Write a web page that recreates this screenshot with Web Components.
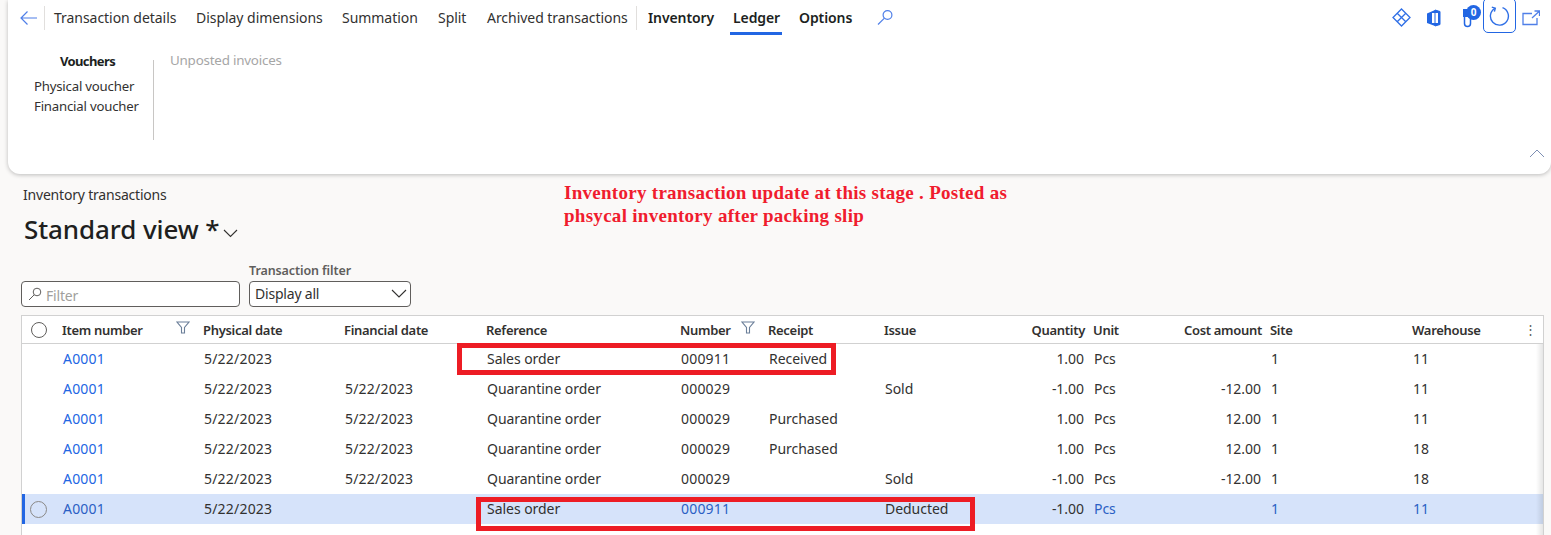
<!DOCTYPE html>
<html>
<head>
<meta charset="utf-8">
<style>
  html, body { margin: 0; height: 100%; overflow: hidden; background: #faf9f8; }
  body { font: 14px "Noto Sans", "Open Sans", sans-serif; color: #323130; }
  tx-page { width: 1551px; height: 535px; }
</style>
</head>
<body>
<tx-page>
  <tx-ribbon slot="ribbon">
    <tx-tab w="142">Transaction details</tx-tab>
    <tx-tab w="146">Display dimensions</tx-tab>
    <tx-tab w="96">Summation</tx-tab>
    <tx-tab w="49">Split</tx-tab>
    <tx-tab w="150" divider>Archived transactions</tx-tab>
    <tx-tab w="85" strong>Inventory</tx-tab>
    <tx-tab w="66" strong active>Ledger</tx-tab>
    <tx-tab w="77" strong>Options</tx-tab>
  </tx-ribbon>
  <tx-heading slot="heading"></tx-heading>
  <tx-note slot="note">Inventory transaction update at this stage . Posted as<br>phsycal inventory after packing slip</tx-note>
  <tx-grid slot="grid">
    <tx-row values="A0001|5/22/2023||Sales order|000911|Received||1.00|Pcs||1|11"></tx-row>
    <tx-row values="A0001|5/22/2023|5/22/2023|Quarantine order|000029||Sold|-1.00|Pcs|-12.00|1|11"></tx-row>
    <tx-row values="A0001|5/22/2023|5/22/2023|Quarantine order|000029|Purchased||1.00|Pcs|12.00|1|11"></tx-row>
    <tx-row values="A0001|5/22/2023|5/22/2023|Quarantine order|000029|Purchased||1.00|Pcs|12.00|1|18"></tx-row>
    <tx-row values="A0001|5/22/2023|5/22/2023|Quarantine order|000029||Sold|-1.00|Pcs|-12.00|1|18"></tx-row>
    <tx-row selected values="A0001|5/22/2023||Sales order|000911||Deducted|-1.00|Pcs||1|11"></tx-row>
    <tx-mark style="left:435px;top:27px;width:369px;height:22px"></tx-mark>
    <tx-mark style="left:454px;top:181px;width:489px;height:24px"></tx-mark>
  </tx-grid>
</tx-page>

<script>
class TxPage extends HTMLElement {
  constructor() {
    super()
    this.attachShadow({ mode: 'open' }).innerHTML = `
      <style>
        :host { display: block; position: relative; overflow: hidden; }
        .body { display: flex; flex-direction: column; }
      </style>
      <div class="body">
        <slot name="ribbon"></slot>
        <slot name="heading"></slot>
        <slot name="grid"></slot>
      </div>
      <slot name="note"></slot>`
  }
}

class TxRibbon extends HTMLElement {
  constructor() {
    super()
    this.attachShadow({ mode: 'open' }).innerHTML = `
      <style>
        :host { display: block; margin-left: 8px; height: 174px; background: #fff; border-radius: 0 0 12px 12px;
          box-shadow: 0 1px 4px rgba(0,0,0,.25); position: relative; letter-spacing: -.04px; }
        .bar { display: flex; align-items: center; height: 35px; }
        .back { width: 25px; margin-left: 11px; display: flex; height: 24px; align-items: center; border-right: 1px solid #e1dfdd; margin-right: 9px; }
        .search { display: flex; }
        .tools { margin-left: auto; display: flex; align-items: center; height: 35px; padding-right: 11px; }
        .tools svg { display: block; }
        .clip { position: relative; width: 20px; height: 20px; margin: 0 1px 0 20px; }
        .clip svg { overflow: visible; }
        .badge { position: absolute; left: 4px; top: -3px; width: 15px; height: 15px; border-radius: 50%; background: #2266e3;
          color: #fff; font-size: 10px; font-weight: 700; line-height: 15px; text-align: center; letter-spacing: 0; }
        .refresh { width: 31px; height: 33px; border: 1px solid #2266e3; border-radius: 5px;
          display: flex; align-items: center; justify-content: center; align-self: flex-start; margin-top: -2px; margin-right: 6px; }
        .refresh svg { margin-left: -2px; }
        .panel { display: flex; padding-top: 9px; }
        .group { width: 145px; padding-left: 1px; box-sizing: border-box; }
        .group h4 { margin: 8px 0 6px 0; font-size: 13px; font-weight: 700; text-align: center; color: #201f1e; line-height: 18px; width: 157px; letter-spacing: -.6px; }
        .group div { line-height: 20px; padding-left: 25px; white-space: nowrap; font-size: 13.2px; letter-spacing: -.2px; }
        .rule { width: 1px; height: 80px; background: #c8c6c4; margin-top: 16px; }
        .off { color: #a6a6a6; margin: 6px 0 0 16px; line-height: 20px; font-size: 13.4px; letter-spacing: -.22px; }
        .collapse { position: absolute; right: 6px; bottom: 16px; display: block; }
      </style>
      <div class="bar">
        <div class="back">
          <svg width="20" height="16" viewBox="0 0 20 16" fill="none" stroke="#4f7fe8" stroke-width="1.2"><path d="M18 8H2M8.5 1.5 2 8l6.5 6.5"/></svg>
        </div>
        <slot></slot>
        <div class="search">
          <svg width="18" height="18" viewBox="0 0 18 18" fill="none" stroke="#4f7fe8" stroke-width="1.2"><circle cx="11.5" cy="6" r="4.4"/><path d="M8.2 9.3 2 15.5"/></svg>
        </div>
        <div class="tools">
          <svg width="19" height="19" viewBox="0 0 19 19" fill="none" stroke="#2f6fe6" stroke-width="1.3" style="margin-right:15px"><path d="M9.5 1 18 9.5 9.5 18 1 9.5zM5.2 5.2l8.6 8.6M13.800 5.2l-8.6 8.6"/></svg>
          <svg width="16" height="18" viewBox="0 0 16 18"><path d="M1 4.5 9 1l5 1.5v13L9 17l-8-3z" fill="#2266e3"/><path d="M6 4h6v10H6z" fill="#fff"/><path d="M9 1l5 1.5v13L9 17z" fill="none" stroke="#2266e3"/></svg>
          <div class="clip">
            <svg width="12" height="20" viewBox="0 0 12 20" fill="none" stroke="#2266e3" stroke-width="1.5"><path d="M1 1h9v8H1z" fill="#2266e3" stroke="none"/><path d="M8.500 4v11.500a3 3 0 0 1-6 0V4"/></svg>
            <div class="badge">0</div>
          </div>
          <div class="refresh">
            <svg width="22" height="22" viewBox="0 0 22 22" fill="none" stroke="#2f6fe6" stroke-width="1.4"><path d="M7 3.300A9 9 0 1 0 14.500 2.700"/><path d="M3.800 2.200 7.300 3.200 6.400 6.700"/></svg>
          </div>
          <svg width="18" height="16" viewBox="0 0 18 16" fill="none" stroke="#4f7fe8" stroke-width="1.3"><path d="M10 3.500H1v11h14V8M10 8l7-6.500M12.500 1H17.500V6"/></svg>
        </div>
      </div>
      <div class="panel">
        <div class="group">
          <h4>Vouchers</h4>
          <div>Physical voucher</div>
          <div>Financial voucher</div>
        </div>
        <div class="rule"></div>
        <div class="off">Unposted invoices</div>
      </div>
      <svg class="collapse" width="16" height="9" viewBox="0 0 16 9" fill="none" stroke="#7d8fb3"><path d="M1 8 8 1l7 7"/></svg>`
  }
}

class TxTab extends HTMLElement {
  constructor() {
    super()
    this.attachShadow({ mode: 'open' }).innerHTML = `
      <style>
        :host { display: block; position: relative; height: 35px; line-height: 35px; white-space: nowrap; box-sizing: border-box; flex: none; }
        :host([strong]) { font-weight: 600; color: #201f1e; letter-spacing: -.1px; }
        :host([divider]) { border-right: 1px solid #e1dfdd; height: 24px; line-height: 24px; margin-right: 11px; }
        :host([active])::after { content: ""; position: absolute; left: -3px; bottom: 0; width: 52px; height: 3px; background: #2266e3; }
      </style>
      <slot></slot>`
    this.style.width = this.getAttribute('w') + 'px'
  }
}

class TxHeading extends HTMLElement {
  constructor() {
    super()
    this.attachShadow({ mode: 'open' }).innerHTML = `
      <style>
        :host { display: block; height: 141px; padding-left: 21px; box-sizing: border-box; }
        .crumb { margin: 12px 0 0 2px; line-height: 18px; letter-spacing: -.2px; color: #323130; }
        .title { display: flex; align-items: center; margin: 7px 0 0 3px; height: 36px; font-size: 26px; font-weight: 500; color: #201f1e; letter-spacing: -.1px; white-space: pre; }
        .title svg { margin: 8px 0 0 4px; }
        .filters { display: flex; gap: 9px; align-items: flex-end; margin-top: 15px; }
        label { display: block; font-size: 12.500px; font-weight: 600; color: #605e5c; line-height: 18px; margin-bottom: 1px; letter-spacing: -.1px; }
        .box { height: 24px; border: 1px solid #605e5c; border-radius: 4px; background: #fff; display: flex; align-items: center; }
        .find { width: 217px; }
        .find svg { margin: 0 4px 0 6px; }
        .find span { color: #a19f9d; letter-spacing: -.2px; padding-top: 2px; }
        .pick { padding: 0 0 2px 5px; height: 22px; width: 155px; letter-spacing: -.2px; justify-content: space-between; }
        .pick svg { margin-right: 3px; }
      </style>
      <div class="crumb">Inventory transactions</div>
      <div class="title">Standard view *<svg width="15" height="9" viewBox="0 0 15 9" fill="none" stroke="#323130" stroke-width="1.1"><path d="M1 1l6.500 6.500L14 1"/></svg></div>
      <div class="filters">
        <div class="box find">
          <svg width="14" height="14" viewBox="0 0 14 14" fill="none" stroke="#605e5c"><circle cx="9" cy="5" r="3.800"/><path d="M6.200 7.800 1 13"/></svg>
          <span>Filter</span>
        </div>
        <div>
          <label>Transaction filter</label>
          <div class="box pick">Display all
            <svg width="16" height="9" viewBox="0 0 16 9" fill="none" stroke="#323130" stroke-width="1.1"><path d="M1 1l7 7 7-7"/></svg>
          </div>
        </div>
      </div>`
  }
}

class TxNote extends HTMLElement {
  constructor() {
    super()
    this.attachShadow({ mode: 'open' }).innerHTML = `
      <style>
        :host { position: absolute; left: 564px; top: 181px; font: 700 19px/23px "Liberation Serif", serif; color: #f01c2e; white-space: nowrap; letter-spacing: .28px; }
      </style>
      <slot></slot>`
  }
}

const cols = '40px 141px 141px 142px 194px 88px 116px 100px 109px 77px 100px 142px 1fr'

const funnel = `<svg width="14" height="13" viewBox="0 0 14 13" fill="none" stroke="#6b7f99" stroke-width="1.1"><path d="M1 1h12L8.500 6.500V12h-3V6.500z"/></svg>`

class TxGrid extends HTMLElement {
  constructor() {
    super()
    const names = ['Item number', 'Physical date', 'Financial date', 'Reference', 'Number', 'Receipt', 'Issue', 'Quantity', 'Unit', 'Cost amount', 'Site', 'Warehouse']
    const cells = names.map(n => {
      const right = n === 'Quantity' || n === 'Cost amount'
      const icon = n === 'Item number' || n === 'Number' ? `<span class="fn">${funnel}</span>` : ''
      return `<div class="${right ? 'r' : ''}">${n}${icon}</div>`
    }).join('')
    this.attachShadow({ mode: 'open' }).innerHTML = `
      <style>
        :host { display: block; position: relative; margin: 0 7px 0 21px; height: 220px; background: #fff;
          border: 1px solid #d1d1d1; border-bottom: 0; --cols: ${cols}; }
        .head { display: grid; grid-template-columns: var(--cols); height: 27px; align-items: center; border-bottom: 1px solid #d1d1d1;
          font-size: 13px; font-weight: 600; color: #323130; letter-spacing: -.3px; white-space: nowrap; }
        .r { text-align: right; padding-right: 8px; }
        .sel { width: 14px; height: 14px; border: 1px solid #605e5c; border-radius: 50%; margin-left: 9px; }
        .head > div { position: relative; }
        .fn { position: absolute; top: -1px; display: block; }
        .head > div:nth-child(2) .fn { left: 114px; }
        .head > div:nth-child(6) .fn { left: 61px; }
        .kebab { position: absolute; right: 6px; top: 6px; color: #605e5c; font-size: 13px; line-height: 14px; }
        .edge { position: absolute; right: 0; top: 28px; bottom: 0; width: 7px; z-index: 1; background: linear-gradient(to right, rgba(0,0,0,0), rgba(0,0,0,.1)); }
      </style>
      <div class="head"><div class="sel"></div>${cells}</div>
      <div class="kebab">⋮</div>
      <slot></slot>
      <div class="edge"></div>`
  }
}

class TxRow extends HTMLElement {
  constructor() {
    super()
    this.attachShadow({ mode: 'open' }).innerHTML = `
      <style>
        :host { display: grid; grid-template-columns: var(--cols); height: 30px; padding-bottom: 2px; box-sizing: border-box; align-items: center; color: #323130; letter-spacing: -.04px; white-space: nowrap; position: relative; }
        :host([selected]) { background: #d6e3fa; }
        :host([selected])::before { content: ""; position: absolute; left: 0; top: 0; bottom: 0; width: 3px; background: #2266e3; }
        div { padding-left: 1px; }
        .r { text-align: right; padding-right: 9px; }
        .num { letter-spacing: .2px; }
        .link { color: #2266e3; }
        :host([selected]) .link { color: #2b5fc4; }
        .sel { width: 15px; height: 15px; border: 1px solid #8a8886; border-radius: 50%; margin: 2px 0 0 8px; padding: 0; }
      </style>`
  }
  connectedCallback() {
    const v = this.getAttribute('values').split('|')
    const sel = this.hasAttribute('selected')
    const html = v.map((t, i) => {
      let c = ''
      if (i === 7 || i === 9) c = 'r'
      if (i === 0 || (sel && (i === 4 || i === 8 || i === 10 || i === 11))) c = 'link'
      if (i < 3 || i === 4) c += ' num'
      return `<div class="${c}">${t}</div>`
    }).join('')
    const holder = document.createElement('template')
    holder.innerHTML = `<div class="${sel ? 'sel' : ''}"></div>${html}`
    this.shadowRoot.appendChild(holder.content)
  }
}

class TxMark extends HTMLElement {
  constructor() {
    super()
    this.attachShadow({ mode: 'open' }).innerHTML = `
      <style>
        :host { position: absolute; display: block; border: 5px solid #ed1c24; pointer-events: none; }
      </style>`
  }
}

customElements.define('tx-page', TxPage)
customElements.define('tx-ribbon', TxRibbon)
customElements.define('tx-tab', TxTab)
customElements.define('tx-heading', TxHeading)
customElements.define('tx-note', TxNote)
customElements.define('tx-grid', TxGrid)
customElements.define('tx-row', TxRow)
customElements.define('tx-mark', TxMark)
</script>
</body>
</html>
